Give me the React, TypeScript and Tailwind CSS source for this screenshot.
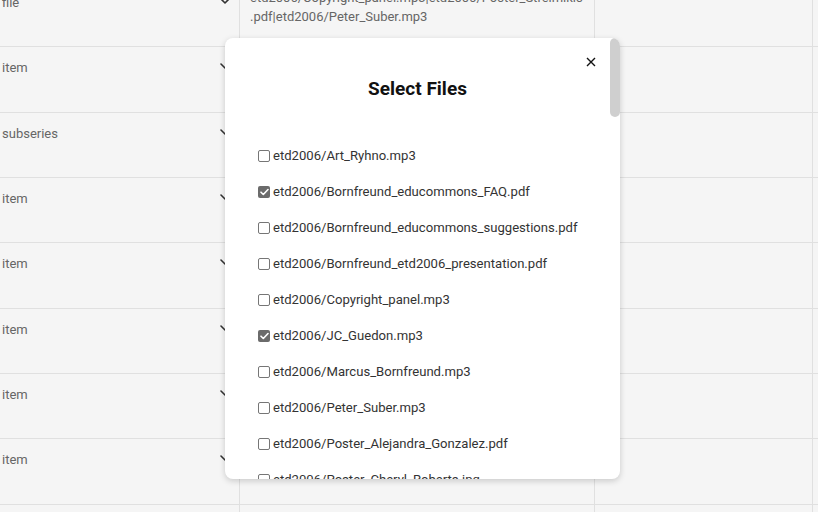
import React from "react";

const rows = ["file", "item", "subseries", "item", "item", "item", "item", "item", "item"];

const files: { name: string; checked: boolean }[] = [
  { name: "etd2006/Art_Ryhno.mp3", checked: false },
  { name: "etd2006/Bornfreund_educommons_FAQ.pdf", checked: true },
  { name: "etd2006/Bornfreund_educommons_suggestions.pdf", checked: false },
  { name: "etd2006/Bornfreund_etd2006_presentation.pdf", checked: false },
  { name: "etd2006/Copyright_panel.mp3", checked: false },
  { name: "etd2006/JC_Guedon.mp3", checked: true },
  { name: "etd2006/Marcus_Bornfreund.mp3", checked: false },
  { name: "etd2006/Peter_Suber.mp3", checked: false },
  { name: "etd2006/Poster_Alejandra_Gonzalez.pdf", checked: false },
  { name: "etd2006/Poster_Cheryl_Roberts.jpg", checked: false },
  { name: "etd2006/Poster_Streimikis.pdf", checked: false },
];

function Chevron() {
  return (
    <svg width="10" height="6" viewBox="0 0 10 6" fill="none">
      <path d="M1 1l4 4 4-4" stroke="#333" strokeWidth="1.6" strokeLinecap="round" strokeLinejoin="round" />
    </svg>
  );
}

function Box({ checked }: { checked: boolean }) {
  if (checked) {
    return (
      <span className="flex h-[12px] w-[12px] shrink-0 items-center justify-center rounded-[2px] bg-[#6b6b6b]">
        <svg width="9" height="8" viewBox="0 0 9 8" fill="none">
          <path d="M1 4.2l2.3 2.3L8 1.5" stroke="#fff" strokeWidth="1.6" strokeLinecap="round" strokeLinejoin="round" />
        </svg>
      </span>
    );
  }
  return <span className="h-[12px] w-[12px] shrink-0 rounded-[2px] border border-[#767676] bg-white" />;
}

export default function App() {
  return (
    <div
      className="relative h-[512px] w-[818px] overflow-hidden bg-[#f5f5f5]"
      style={{ fontFamily: "Roboto, 'Liberation Sans', sans-serif" }}
    >
      <div className="-mt-[18px] flex flex-col">
        {rows.map((label, i) => (
          <div key={i} className="flex h-[65.33px] border-b border-[#e0e0e0]">
            <div className="relative flex w-[240px] shrink-0 justify-between border-r border-[#e0e0e0] pl-[2px] pr-[9px] pt-[11px]">
              <span className="text-[13px] leading-[20px] text-[#666]">{label}</span>
              <span className="pt-[5px]">
                <Chevron />
              </span>
            </div>
            <div className="w-[355px] shrink-0 border-r border-[#e0e0e0] pl-[10px] pr-[8px] pt-[7px] text-[13px] leading-[18.5px] text-[#666]">
              {i === 0 && (
                <>
                  <div className="whitespace-nowrap">etd2006/Copyright_panel.mp3|etd2006/Poster_Streimikis</div>
                  <div>.pdf|etd2006/Peter_Suber.mp3</div>
                </>
              )}
            </div>
            <div className="w-[218px] shrink-0 border-r border-[#e0e0e0]" />
            <div className="flex-1" />
          </div>
        ))}
      </div>

      <div className="absolute left-[225px] top-[38px] h-[441px] w-[395px] overflow-hidden rounded-[8px] bg-white shadow-[0_2px_6px_rgba(0,0,0,0.18)]">
        <div className="absolute right-0 top-0 h-[79px] w-[10px] rounded-full bg-[#cfcfcf]" />
        <button className="absolute left-[361px] top-[19px] flex h-[10px] w-[10px] items-center justify-center">
          <svg width="10" height="10" viewBox="0 0 10 10" fill="none">
            <path d="M1 1l8 8M9 1l-8 8" stroke="#111" strokeWidth="1.4" />
          </svg>
        </button>
        <div className="w-[385px] pt-[40px]">
          <h2 className="text-center text-[19px] font-bold leading-[22px] text-[#111]">Select Files</h2>
          <ul className="mt-[38px] pl-[33px]">
            {files.map((f) => (
              <li key={f.name} className="flex h-[36px] items-center gap-[3px]">
                <Box checked={f.checked} />
                <span className="text-[13.1px] leading-[18px] text-[#333]">{f.name}</span>
              </li>
            ))}
          </ul>
        </div>
      </div>
    </div>
  );
}
